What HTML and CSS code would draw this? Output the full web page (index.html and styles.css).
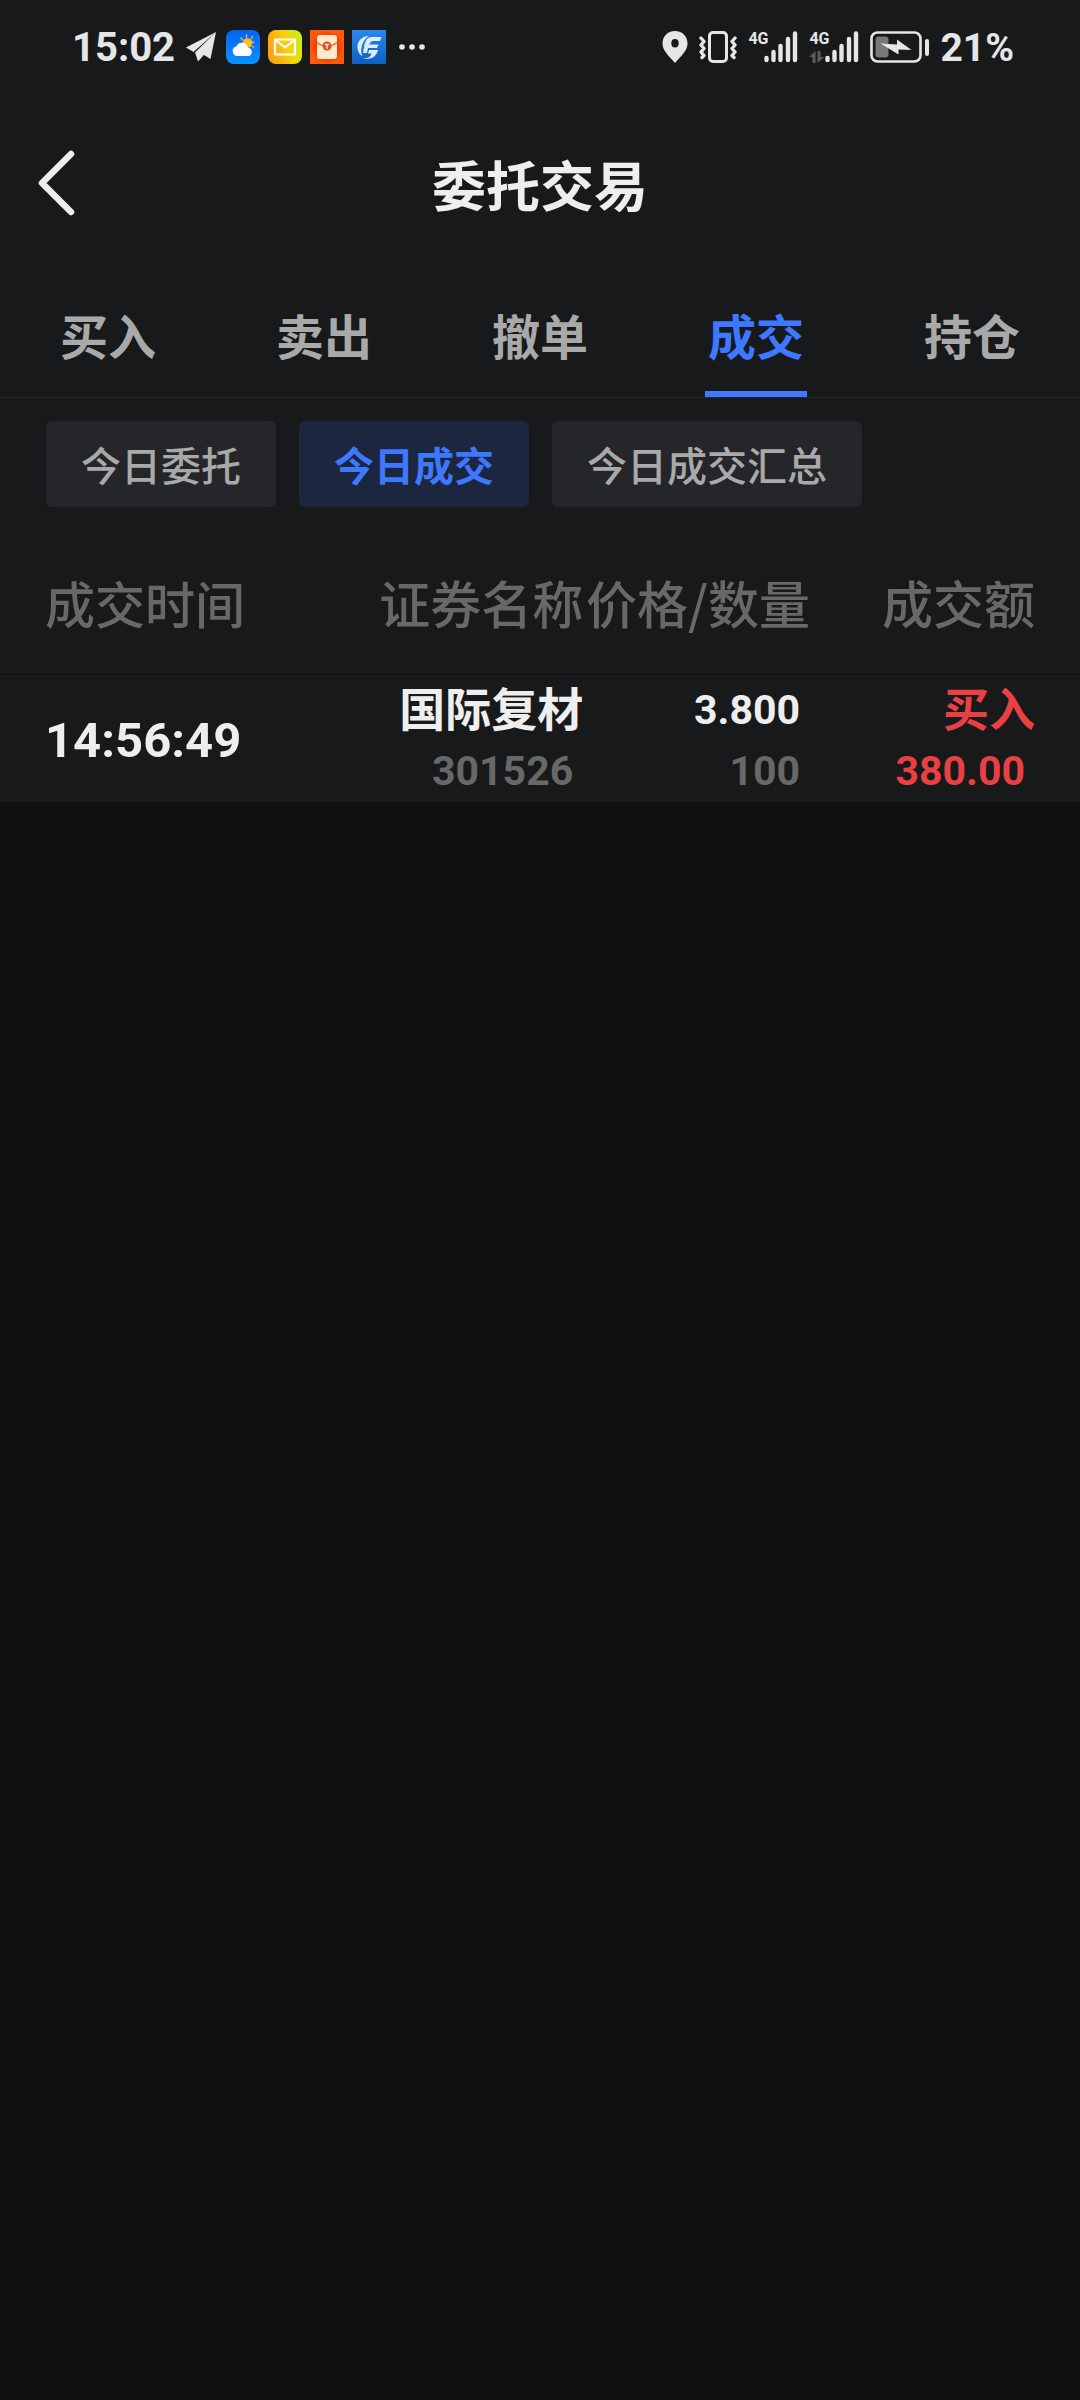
FILE: index.html
```html
<!DOCTYPE html>
<html lang="zh-CN">
<head>
<meta charset="utf-8">
<meta name="viewport" content="width=device-width, initial-scale=1">
<title>委托交易</title>
<link rel="stylesheet" href="styles.css">
</head>
<body>
<div class="status">
  <div class="status-group">
    <span class="clock">15:02</span>
    <svg class="icon-send" width="30" height="30" viewBox="0 0 30 30" aria-hidden="true"><path fill="#e6e6e6" d="M30 0 0 15.500l7.500 4.500zM30 0 9 20.500 12 29.500l5-5.500zM30 0 15.500 21.500 24.500 27z"/></svg>
    <svg class="app" viewBox="0 0 34 34" aria-hidden="true">
      <defs><linearGradient id="sky" x1="0" y1="0" x2="0" y2="1"><stop offset="0" stop-color="#0562f5"/><stop offset="1" stop-color="#0a93ff"/></linearGradient></defs>
      <rect width="34" height="34" rx="8" fill="url(#sky)"/>
      <path stroke="#c9b663" stroke-width="1.500" stroke-linecap="round" d="M20.500 5v2.500M15 8l1.500 2M26.500 6.500 25.500 8.500M28 12l-1.500.5M27.500 17l-1-.5"/>
      <circle cx="21.500" cy="13" r="4.800" fill="#ffbe1c"/>
      <path fill="#fff" d="M11 26a5 5 0 0 1-.5-9.800 6 6 0 0 1 11.300 1.200A4.500 4.500 0 0 1 23 26z"/>
    </svg>
    <svg class="app" viewBox="0 0 34 34" aria-hidden="true">
      <defs><linearGradient id="mail" x1="0" y1=".6" x2="1" y2=".3"><stop offset="0" stop-color="#ffa011"/><stop offset=".6" stop-color="#f5d40a"/><stop offset="1" stop-color="#c9ee12"/></linearGradient></defs>
      <rect width="34" height="34" rx="8" fill="url(#mail)"/>
      <path fill="none" stroke="#fff" stroke-width="2.200" stroke-linejoin="round" d="M7 9.500h20v15H7zM8 10.500l9 7 9-7"/>
    </svg>
    <svg class="app" viewBox="0 0 34 34" aria-hidden="true">
      <defs><radialGradient id="red"><stop offset=".5" stop-color="#f02d00"/><stop offset="1" stop-color="#ff5a08"/></radialGradient></defs>
      <rect width="34" height="34" fill="url(#red)"/>
      <rect x="7" y="5" width="20" height="24" rx="3" fill="#ffeacb"/>
      <path fill="none" stroke="#ef5a2c" stroke-width="1.200" d="M7 12.500q3 3 7 3.500M27 12.500q-3 3-7 3.500"/>
      <circle cx="17" cy="16" r="4.500" fill="#e94a19"/>
      <path stroke="#ffeacb" stroke-width="1.400" d="M14.800 14.500h4.400M17 14.500v4.500"/>
    </svg>
    <svg class="app" viewBox="0 0 34 34" aria-hidden="true">
      <defs><linearGradient id="blue" x1="0" y1="0" x2="0" y2="1"><stop offset="0" stop-color="#2b87ee"/><stop offset="1" stop-color="#0e5fc2"/></linearGradient></defs>
      <rect width="34" height="34" fill="url(#blue)"/>
      <path fill="#dcecff" d="M17 6C9 6 5 12 5.500 18c.3 4 2.500 7 5 8.500C8 21 9 11 17 6zM29.500 7H20c-5 0-7 4-8 10l-1 6h4l1-5h9l1.500-3.500h-9c.5-2 1.500-3.500 4-3.500H28zM17 20h9c-1 5-5 9-12 9-1 0-2 0-3-.5 5 0 8-2 8.500-5H16z"/>
    </svg>
    <svg class="icon-more" width="26" height="6" viewBox="0 0 26 6" aria-hidden="true"><g fill="#e6e6e6"><circle cx="3" cy="3" r="2.800"/><circle cx="13" cy="3" r="2.800"/><circle cx="23" cy="3" r="2.800"/></g></svg>
  </div>
  <div class="status-group">
    <svg width="26" height="32" viewBox="0 0 26 32" aria-hidden="true"><path fill="#e6e6e6" fill-rule="evenodd" d="M13 0C5.500 0 .5 5.500.5 12.500c0 7 6 12 12.500 19.500 6.500-7.500 12.500-12.500 12.500-19.500C25.500 5.500 20.500 0 13 0zm0 8a3.500 4 0 0 1 0 8.500A3.500 4 0 0 1 13 8z"/></svg>
    <svg class="icon-vibrate" width="38" height="32" viewBox="0 0 38 32" fill="none" stroke="#e6e6e6" stroke-linecap="round" stroke-linejoin="round" aria-hidden="true"><rect x="10.500" y="1.500" width="17" height="29" rx="3.500" stroke-width="3"/><path stroke-width="3.400" d="M2 7l3 3.500-3 3.500 3 3.500L2 21l3 3.500-2 2M36 7l-3 3.500 3 3.500-3 3.500 3 3.500-3 3.500 2 2"/></svg>
    <div class="signal">
      <div class="network"><span>4G</span></div>
      <svg width="34" height="32" viewBox="0 0 34 32" stroke="#e6e6e6" stroke-width="4.400" stroke-linecap="round" aria-hidden="true"><path d="M2.500 27v2M9.500 21v8M16.500 15v14M24 8v21M31 2.500v26.500"/></svg>
    </div>
    <div class="signal">
      <div class="network"><span>4G</span>
        <svg width="15" height="12" viewBox="0 0 15 12" fill="#5b5c5d" aria-hidden="true"><path d="M0 6 6.500 0v12h-3V6zM15 6 8.500 12V0h3v6z"/></svg></div>
      <svg width="34" height="32" viewBox="0 0 34 32" stroke="#e6e6e6" stroke-width="4.400" stroke-linecap="round" aria-hidden="true"><path d="M2.500 27v2M9.500 21v8M16.500 15v14M24 8v21M31 2.500v26.500"/></svg>
    </div>
    <svg class="icon-battery" width="60" height="32" viewBox="0 0 60 32" aria-hidden="true"><rect x="1.500" y="1.500" width="49" height="29" rx="6" fill="none" stroke="#e6e6e6" stroke-width="2.600"/><rect x="5.500" y="5.500" width="13" height="21" rx="3" fill="#777879"/><path fill="#e6e6e6" d="M10.500 12.500 27 13.500V8.500l14.500 10.500-13-.5v5z"/><rect x="55" y="8" width="4" height="17" rx="2" fill="#e6e6e6"/></svg>
    <span class="percent">21%</span>
  </div>
</div>

<header class="titlebar">
  <button class="back" type="button" aria-label="返回"><svg width="40" height="68" viewBox="0 0 40 68" aria-hidden="true"><path fill="none" stroke="#ededed" stroke-width="6.500" stroke-linecap="round" stroke-linejoin="round" d="M35 4 6 33l29 29"/></svg></button>
  <h1>委托交易</h1>
</header>

<nav class="tabs">
  <a href="#buy">买入</a>
  <a href="#sell">卖出</a>
  <a href="#cancel">撤单</a>
  <a href="#deals" class="active" aria-current="page">成交</a>
  <a href="#holdings">持仓</a>
</nav>

<main>
  <div class="chips">
    <button type="button">今日委托</button>
    <button type="button" class="active">今日成交</button>
    <button type="button">今日成交汇总</button>
  </div>
  <table class="deals">
    <thead>
      <tr><th class="time">成交时间</th><th class="name">证券名称</th><th class="price">价格/数量</th><th class="amount">成交额</th></tr>
    </thead>
    <tbody>
      <tr>
        <td class="time">14:56:49</td>
        <td class="name"><span class="label">国际复材</span><span class="figure muted">301526</span></td>
        <td class="price"><span class="figure">3.800</span><span class="figure muted">100</span></td>
        <td class="amount buy"><span class="label">买入</span><span class="figure">380.00</span></td>
      </tr>
    </tbody>
  </table>
</main>
</body>
</html>
```
FILE: styles.css
```css
* {
  box-sizing: border-box;
}

body {
  margin: 0;
  min-height: 100vh;
  background: #0f1012;
  color: #eee;
  font-family: "Noto Sans CJK SC", sans-serif;
  font-weight: 500;
}

svg {
  display: block;
  flex: none;
}

button {
  border: 0;
  margin: 0;
  font: inherit;
  cursor: pointer;
}

/* system status bar */
.status {
  display: flex;
  justify-content: space-between;
  height: 96px;
  padding: 0 66px 2px 72px;
  background: #17191a;
  color: #e6e6e6;
  font-family: Roboto, sans-serif;
  font-weight: 700;
}

.status-group {
  display: flex;
  align-items: center;
}

.clock {
  font-size: 40px;
  line-height: 48px;
  padding-top: 2px;
}

.icon-send {
  margin: 0 10px 0 11px;
}

.app {
  width: 34px;
  height: 34px;
  margin-right: 8px;
}

.icon-more {
  margin-left: 5px;
}

.icon-vibrate {
  margin: 0 11px;
}

.signal {
  display: flex;
  margin-right: 11px;
}

.network {
  display: flex;
  flex-direction: column;
  justify-content: space-between;
  width: 16px;
  height: 32px;
  font-size: 16px;
  line-height: 16px;
}

.icon-battery {
  margin-right: 10px;
}

.percent {
  font-size: 39px;
  line-height: 48px;
  padding-top: 2px;
}

/* page title */
.titlebar {
  display: grid;
  grid-template-columns: 1fr auto 1fr;
  align-items: center;
  height: 176px;
  padding: 0 36px;
  background: #17191a;
}

.titlebar h1 {
  margin: 0;
  font-size: 54px;
  line-height: 80px;
  font-weight: 700;
}

.back {
  justify-self: start;
  padding: 0;
  background: none;
}

/* section tabs */
.tabs {
  display: grid;
  grid-template-columns: repeat(5, 1fr);
  justify-items: center;
  border-bottom: 1px solid #27282b;
  background: #17191a;
}

.tabs a {
  height: 125px;
  padding: 0 3px;
  border-bottom: 6px solid transparent;
  color: #a9a9a9;
  font-size: 48px;
  font-weight: 700;
  line-height: 124px;
  text-decoration: none;
}

.tabs .active {
  border-color: #3e78ff;
  color: #3e78ff;
}

/* filter chips */
.chips {
  display: flex;
  gap: 23px;
  padding: 23px 46px;
  border-bottom: 1px solid #1b1c1e;
  background: #17191a;
}

.chips button {
  height: 86px;
  padding: 0 35px;
  border-radius: 6px;
  background: #25262a;
  color: #a9a9a9;
  font-size: 40px;
  line-height: 86px;
}

.chips .active {
  background: #1c273f;
  color: #3e78ff;
  font-weight: 700;
}

/* list of today's deals */
.deals {
  width: 100%;
  table-layout: fixed;
  border-collapse: collapse;
  background: #17191a;
}

.deals th {
  height: 143px;
  padding: 0;
  border-bottom: 1px solid #0f1012;
  color: #686868;
  font-size: 51px;
  line-height: 72px;
  font-weight: 500;
  text-align: right;
  white-space: nowrap;
}

.deals td {
  height: 127px;
  padding: 5px 0 0;
  font-family: Roboto, "Noto Sans CJK SC", sans-serif;
  font-weight: 700;
  text-align: right;
}

.deals .time {
  width: 33%;
  padding-left: 45px;
  text-align: left;
}

.deals th.time {
  font-size: 50px;
}

.deals td.time {
  font-size: 49px;
}

.deals .name,
.deals .price {
  width: 21%;
}

.deals .amount {
  width: 25%;
  padding-right: 45px;
}

.label,
.figure {
  display: block;
  line-height: 61px;
}

.label {
  font-size: 46px;
}

.figure {
  padding-right: 10px;
  font-size: 41px;
}

.muted {
  color: #686868;
}

.buy {
  color: #e94044;
}
```
